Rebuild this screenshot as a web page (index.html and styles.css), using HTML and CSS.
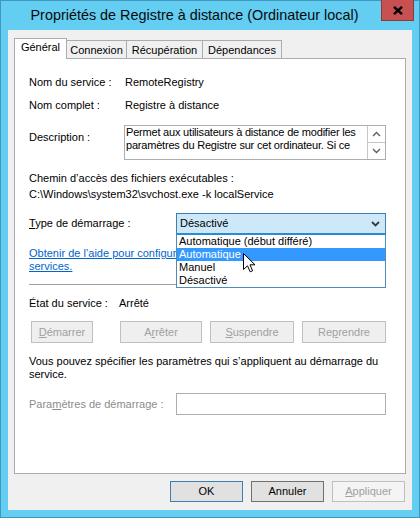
FILE: index.html
```html
<!DOCTYPE html>
<html lang="fr">
<head>
<meta charset="utf-8">
<title>Propriétés de Registre à distance</title>
<link rel="stylesheet" href="styles.css">
</head>
<body>
<div class="window">
  <div class="titlebar">
    <div class="title">Propriétés de Registre à distance (Ordinateur local)</div>
    <div class="close">
      <svg width="10" height="9" viewBox="0 0 10 9"><path d="M1 0.8 L9 8.2 M9 0.8 L1 8.2" stroke="#000" stroke-width="2.4" fill="none"/></svg>
    </div>
  </div>
  <div class="client">
    <div class="tabs">
      <div class="tab active">Général</div>
      <div class="tab t-conn">Connexion</div>
      <div class="tab t-recup">Récupération</div>
      <div class="tab t-dep">Dépendances</div>
    </div>
    <div class="panel">
      <div class="row r-name"><span class="label w96">Nom du service :</span><span>RemoteRegistry</span></div>
      <div class="row r-full"><span class="label w96">Nom complet :</span><span>Registre à distance</span></div>
      <div class="row r-desc">
        <span class="label w95 desc-label">Description :</span>
        <div class="descbox">
          <div class="desctext">
            <div>Permet aux utilisateurs à distance de modifier les</div>
            <div>paramètres du Registre sur cet ordinateur. Si ce</div>
          </div>
          <div class="scroll">
            <div class="sbtn"><svg width="9" height="6" viewBox="0 0 9 6"><path d="M1 5 L4.5 1.5 L8 5" stroke="#5a5a5a" stroke-width="1.3" fill="none"/></svg></div>
            <div class="sbtn sdown"><svg width="9" height="6" viewBox="0 0 9 6"><path d="M1 1 L4.5 4.5 L8 1" stroke="#5a5a5a" stroke-width="1.3" fill="none"/></svg></div>
          </div>
        </div>
      </div>
      <div class="row r-chemin">Chemin d’accès des fichiers exécutables :</div>
      <div class="row r-path">C:\Windows\system32\svchost.exe -k localService</div>
      <div class="row r-type">
        <span class="label w147"><u>T</u>ype de démarrage :</span>
        <div class="combo">
          <span>Désactivé</span>
          <svg width="9" height="6" viewBox="0 0 9 6"><path d="M1 1 L4.5 4.5 L8 1" stroke="#3a3a3a" stroke-width="1.8" fill="none"/></svg>
          <div class="dropdown">
            <div class="item">Automatique (début différé)</div>
            <div class="item selected">Automatique</div>
            <div class="item">Manuel</div>
            <div class="item">Désactivé</div>
          </div>
        </div>
      </div>
      <div class="link"><span class="a clip">Obtenir de l’aide pour configurer les options de démarrage des</span><span class="a">services.</span></div>
      <div class="sep"></div>
      <div class="row r-state"><span class="label w90">État du service :</span><span>Arrêté</span></div>
      <div class="row r-buttons">
        <div class="btn dis b1"><u>D</u>émarrer</div>
        <div class="btn dis b2">A<u>r</u>rêter</div>
        <div class="btn dis b3"><u>S</u>uspendre</div>
        <div class="btn dis b4">Re<u>p</u>rendre</div>
      </div>
      <div class="row r-info">Vous pouvez spécifier les paramètres qui s’appliquent au démarrage du<br>service.</div>
      <div class="row r-params">
        <span class="label w147 grey">Para<u>m</u>ètres de démarrage :</span>
        <div class="input"></div>
      </div>
    </div>
    <div class="footer">
      <div class="fbtn ok">OK</div>
      <div class="fbtn cancel">Annuler</div>
      <div class="fbtn dis"><u>A</u>ppliquer</div>
    </div>
  </div>
  <svg class="cursor" width="13" height="20" viewBox="0 0 13 20"><path d="M0.5 0.5 L0.5 16.5 L4.5 12.8 L7.2 18.8 L9.6 17.8 L7 11.8 L12 11.8 Z" fill="#fff" stroke="#000" stroke-width="1"/></svg>
</div>
</body>
</html>
```

FILE: styles.css
```css
* { box-sizing: border-box; }
body {
  margin: 0;
  background: #63cdf2;
  font-family: "Liberation Sans", Arial, sans-serif;
  font-size: 11px;
  color: #000;
}
.window {
  position: relative;
  width: 420px;
  height: 518px;
  background: #63cdf2;
  box-shadow: inset 0 0 0 1px #3f97c0;
  display: flex;
  flex-direction: column;
}
.titlebar {
  height: 30px;
  display: flex;
  align-items: flex-start;
  flex-shrink: 0;
}
.title {
  flex: 1;
  text-align: center;
  padding-left: 8px;
  font-size: 14.4px;
  line-height: 30px;
  white-space: nowrap;
  color: #0a0a0a;
}
.close {
  width: 33px;
  height: 21px;
  margin-right: 6px;
  background: #c75050;
  border: 1px solid #8a3a3a;
  border-top: 0;
  display: flex;
  align-items: center;
  justify-content: center;
}
.client {
  margin: 0 8px 8px;
  height: 480px;
  background: #f0f0f0;
  padding: 8px 6px;
  display: flex;
  flex-direction: column;
}
.tabs {
  display: flex;
  height: 20px;
  align-items: flex-start;
  position: relative;
  z-index: 1;
}
.tab {
  height: 18px;
  margin-top: 2px;
  border: 1px solid #acacac;
  border-bottom: 0;
  border-left: 0;
  background: #f0f0f0;
  text-align: center;
  line-height: 13px;
  padding-top: 3px;
  white-space: nowrap;
}
.tab.active {
  width: 53px;
  height: 21px;
  margin-top: 0;
  border-left: 1px solid #acacac;
  background: #fff;
  padding-top: 2px;
}
.t-conn { width: 60px; }
.t-recup { width: 76px; }
.t-dep { width: 79px; }
.panel {
  height: 416px;
  background: #fff;
  border: 1px solid #acacac;
  padding: 17px 19px 0 14px;
  display: flex;
  flex-direction: column;
}
.row {
  display: flex;
  align-items: center;
  line-height: 13px;
  white-space: nowrap;
}
.label { flex-shrink: 0; }
.w96 { width: 96px; }
.w95 { width: 95px; }
.w90 { width: 90px; }
.w147 { width: 147px; }
.grey { color: #8c8c8c; }
.r-full { margin-top: 10px; }
.r-desc { margin-top: 13px; align-items: flex-start; }
.desc-label { padding-top: 6px; }
.descbox {
  width: 262px;
  height: 35px;
  border: 1px solid #abadb3;
  display: flex;
}
.desctext {
  flex: 1;
  padding-left: 1px;
  line-height: 13px;
  letter-spacing: -0.2px;
  overflow: hidden;
}
.scroll {
  width: 18px;
  display: flex;
  flex-direction: column;
  border-left: 1px solid #c6c6c6;
}
.sbtn {
  flex: 1;
  display: flex;
  align-items: center;
  justify-content: center;
}
.sdown { border-top: 1px solid #c6c6c6; }
.r-chemin { margin-top: 12px; }
.r-path { margin-top: 3px; }
.r-type { margin-top: 12px; position: relative; z-index: 2; }
.combo {
  position: relative;
  width: 210px;
  height: 21px;
  background: #cde8f8;
  border: 1px solid #3c7fb1;
  border-bottom-color: #2b8ad4;
  padding: 0 5px 0 3px;
  line-height: 19px;
  display: flex;
  align-items: center;
  justify-content: space-between;
}
.dropdown {
  position: absolute;
  left: -1px;
  top: 20px;
  width: 210px;
  background: #fff;
  border: 1px solid #4d8cbc;
  border-top-color: #2b8ad4;
}
.item {
  height: 13px;
  line-height: 13px;
  padding-left: 2px;
}
.item.selected {
  background: #3399ff;
  color: #fff;
}
.link {
  margin-top: 13px;
  line-height: 13px;
  white-space: nowrap;
  display: flex;
  flex-direction: column;
  align-items: flex-start;
}
.link .a {
  color: #0066cc;
  text-decoration: underline;
}
.link .clip {
  display: block;
  max-width: 147px;
  overflow: hidden;
}
.sep {
  margin-top: 11px;
  height: 1px;
  background: #a0a0a0;
}
.r-state { margin-top: 12px; }
.r-buttons { margin-top: 11px; }
.btn {
  height: 22px;
  line-height: 20px;
  border: 1px solid #bfbfbf;
  background: #efefef;
  color: #a0a0a0;
  text-align: center;
}
.b1 { width: 62px; margin-left: 2px; }
.b2 { width: 82px; margin-left: 27px; }
.b3 { width: 84px; margin-left: 8px; }
.b4 { width: 84px; margin-left: 8px; }
.r-info { margin-top: 12px; display: block; }
.r-params { margin-top: 12px; }
.input {
  width: 210px;
  height: 22px;
  border: 1px solid #abadb3;
  background: #fff;
}
.footer {
  margin-top: 7px;
  margin-right: 1px;
  display: flex;
  justify-content: flex-end;
  gap: 8px;
}
.fbtn {
  width: 73px;
  height: 21px;
  line-height: 19px;
  text-align: center;
  border: 1px solid #adadad;
  background: #e1e1e1;
}
.fbtn.ok { border-color: #3c7fb1; }
.fbtn.cancel { border-color: #707070; }
.fbtn.dis {
  border-color: #bfbfbf;
  background: #f4f4f4;
  color: #a0a0a0;
}
.cursor {
  position: absolute;
  left: 243px;
  top: 253px;
  z-index: 5;
}
```
